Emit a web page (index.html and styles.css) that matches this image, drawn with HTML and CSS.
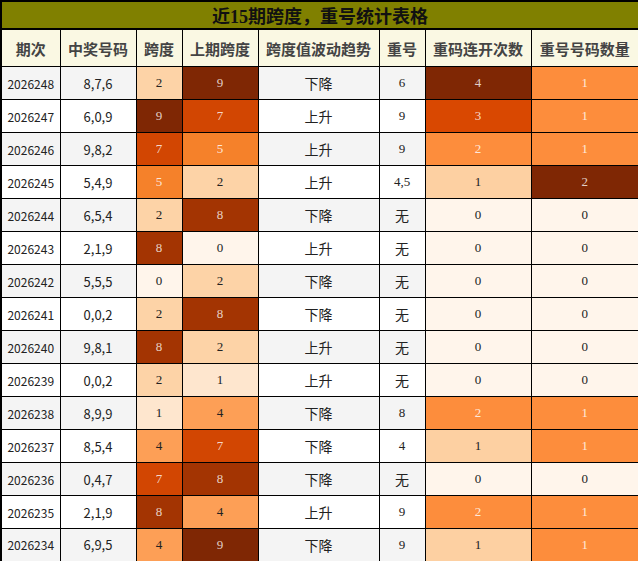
FILE: index.html
```html
<!DOCTYPE html>
<html lang="zh">
<head>
<meta charset="utf-8">
<title>近15期跨度，重号统计表格</title>
<link rel="stylesheet" href="styles.css">
</head>
<body>
<table class="stats">
  <colgroup>
    <col class="w-period"><col class="w-num"><col class="w-span"><col class="w-prev"><col class="w-trend"><col class="w-rep"><col class="w-cnt"><col class="w-qty">
  </colgroup>
  <thead>
    <tr class="title-row"><th colspan="8">近15期跨度，重号统计表格</th></tr>
    <tr class="head-row">
      <th>期次</th><th>中奖号码</th><th>跨度</th><th>上期跨度</th><th>跨度值波动趋势</th><th>重号</th><th>重码连开次数</th><th>重号号码数量</th>
    </tr>
  </thead>
  <tbody>
    <tr class="odd"><td class="sans">2026248</td><td class="sans nums">8,7,6</td><td class="s2">2</td><td class="s9">9</td><td class="trend">下降</td><td>6</td><td class="r4">4</td><td class="q1">1</td></tr>
    <tr><td class="sans">2026247</td><td class="sans nums">6,0,9</td><td class="s9">9</td><td class="s7">7</td><td class="trend">上升</td><td>9</td><td class="r3">3</td><td class="q1">1</td></tr>
    <tr class="odd"><td class="sans">2026246</td><td class="sans nums">9,8,2</td><td class="s7">7</td><td class="s5">5</td><td class="trend">上升</td><td>9</td><td class="r2">2</td><td class="q1">1</td></tr>
    <tr><td class="sans">2026245</td><td class="sans nums">5,4,9</td><td class="s5">5</td><td class="s2">2</td><td class="trend">上升</td><td>4,5</td><td class="r1">1</td><td class="q2">2</td></tr>
    <tr class="odd"><td class="sans">2026244</td><td class="sans nums">6,5,4</td><td class="s2">2</td><td class="s8">8</td><td class="trend">下降</td><td class="cjk">无</td><td class="r0">0</td><td class="q0">0</td></tr>
    <tr><td class="sans">2026243</td><td class="sans nums">2,1,9</td><td class="s8">8</td><td class="s0">0</td><td class="trend">上升</td><td class="cjk">无</td><td class="r0">0</td><td class="q0">0</td></tr>
    <tr class="odd"><td class="sans">2026242</td><td class="sans nums">5,5,5</td><td class="s0">0</td><td class="s2">2</td><td class="trend">下降</td><td class="cjk">无</td><td class="r0">0</td><td class="q0">0</td></tr>
    <tr><td class="sans">2026241</td><td class="sans nums">0,0,2</td><td class="s2">2</td><td class="s8">8</td><td class="trend">下降</td><td class="cjk">无</td><td class="r0">0</td><td class="q0">0</td></tr>
    <tr class="odd"><td class="sans">2026240</td><td class="sans nums">9,8,1</td><td class="s8">8</td><td class="s2">2</td><td class="trend">上升</td><td class="cjk">无</td><td class="r0">0</td><td class="q0">0</td></tr>
    <tr><td class="sans">2026239</td><td class="sans nums">0,0,2</td><td class="s2">2</td><td class="s1">1</td><td class="trend">上升</td><td class="cjk">无</td><td class="r0">0</td><td class="q0">0</td></tr>
    <tr class="odd"><td class="sans">2026238</td><td class="sans nums">8,9,9</td><td class="s1">1</td><td class="s4">4</td><td class="trend">下降</td><td>8</td><td class="r2">2</td><td class="q1">1</td></tr>
    <tr><td class="sans">2026237</td><td class="sans nums">8,5,4</td><td class="s4">4</td><td class="s7">7</td><td class="trend">下降</td><td>4</td><td class="r1">1</td><td class="q1">1</td></tr>
    <tr class="odd"><td class="sans">2026236</td><td class="sans nums">0,4,7</td><td class="s7">7</td><td class="s8">8</td><td class="trend">下降</td><td class="cjk">无</td><td class="r0">0</td><td class="q0">0</td></tr>
    <tr><td class="sans">2026235</td><td class="sans nums">2,1,9</td><td class="s8">8</td><td class="s4">4</td><td class="trend">上升</td><td>9</td><td class="r2">2</td><td class="q1">1</td></tr>
    <tr class="odd"><td class="sans">2026234</td><td class="sans nums">6,9,5</td><td class="s4">4</td><td class="s9">9</td><td class="trend">下降</td><td>9</td><td class="r1">1</td><td class="q1">1</td></tr>
  </tbody>
</table>
</body>
</html>
```

FILE: styles.css
```css
html, body {
  margin: 0;
  padding: 0;
  background: #ffffff;
}

body {
  font-family: "Liberation Serif", "Noto Sans CJK SC", serif;
  font-size: 13px;
  color: #222;
}

.stats {
  width: 638px;
  border-collapse: collapse;
  table-layout: fixed;
  border: 2px solid #000;
}

.w-period { width: 59px; }
.w-num { width: 76px; }
.w-span { width: 46px; }
.w-prev { width: 76px; }
.w-trend { width: 121px; }
.w-rep { width: 46px; }
.w-cnt { width: 106px; }
.w-qty { width: 108px; }

.stats th,
.stats td {
  border: 1px solid #000;
  padding: 0;
  text-align: center;
  vertical-align: middle;
}

.title-row th {
  height: 25px;
  background: #808000;
  color: #111;
  font-size: 18px;
  font-weight: bold;
  border-bottom: 2px solid #000;
}

.head-row th {
  height: 36px;
  background: #faf8e3;
  color: #444;
  font-family: "Noto Sans CJK SC", sans-serif;
  font-size: 15px;
  font-weight: bold;
}

.stats tbody tr {
  height: 33px;
  background: #ffffff;
}

.stats tbody tr.odd {
  background: #f4f4f4;
}

.sans {
  font-family: "Noto Sans CJK SC", "DejaVu Sans", sans-serif;
  font-size: 12px;
  color: #222;
}

.nums {
  font-size: 13px;
}

.trend {
  font-family: "Noto Sans CJK SC", sans-serif;
  font-size: 14px;
  color: #222;
  padding-top: 3px;
}

.cjk {
  font-family: "Noto Sans CJK SC", sans-serif;
  font-size: 14px;
}

.s0 { background: #fff5eb; }
.s1 { background: #fee6ce; }
.s2 { background: #fdd3a7; }
.s4 { background: #fd9f56; }
.s5 { background: #f5812a; color: rgba(255, 255, 255, 0.82); }
.s7 { background: #d24602; color: rgba(255, 255, 255, 0.8); }
.s8 { background: #a33402; color: rgba(255, 255, 255, 0.78); }
.s9 { background: #7f2704; color: rgba(255, 255, 255, 0.78); }

.r0 { background: #fff5eb; }
.r1 { background: #fdd0a2; }
.r2 { background: #fd8d3c; color: rgba(255, 255, 255, 0.82); }
.r3 { background: #d94801; color: rgba(255, 255, 255, 0.8); }
.r4 { background: #7f2704; color: rgba(255, 255, 255, 0.78); }

.q0 { background: #fff5eb; }
.q1 { background: #fd8d3c; color: rgba(255, 255, 255, 0.82); }
.q2 { background: #7f2704; color: rgba(255, 255, 255, 0.78); }
```
